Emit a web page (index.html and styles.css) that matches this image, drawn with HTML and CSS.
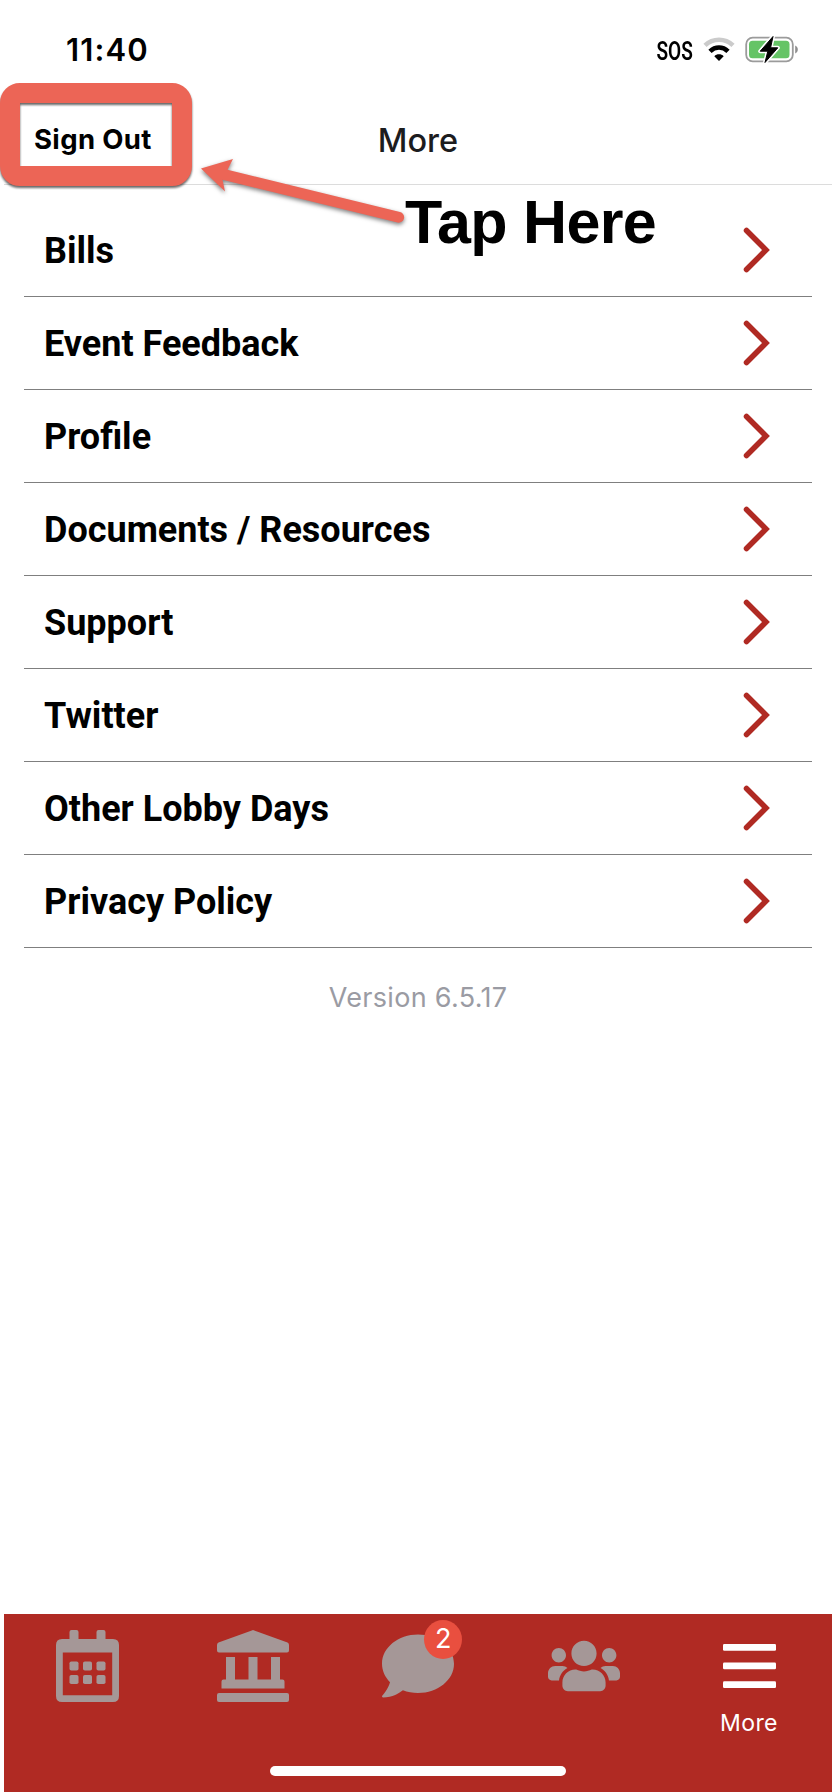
FILE: index.html
```html
<!DOCTYPE html>
<html lang="en">
<head>
    <meta charset="UTF-8">
    <meta name="viewport" content="width=device-width, initial-scale=1.0">
    <title>More</title>
    <link rel="stylesheet" href="styles.css">
</head>
<body>
    <div class="screen">
        <div class="status-bar">
            <span class="time">11:40</span>
            <div class="status-icons">
                <span class="sos">SOS</span>
                <svg class="wifi" width="32" height="25" viewBox="0 0 32 25">
                    <path d="M2 8.400C10 .8 22 .8 30 8.400" fill="none" stroke="#cbcbcb" stroke-width="4.600"/>
                    <path d="M7 14.300C12.200 9.200 19.800 9.200 25 14.300" fill="none" stroke="#000" stroke-width="4.600"/>
                    <path d="M11.300 19.200C13.800 16.600 18.200 16.600 20.700 19.200L16 24z"/>
                </svg>
                <svg class="battery" width="54" height="29" viewBox="0 0 54 29">
                    <rect x="1.200" y="2.700" width="46.600" height="23.600" rx="6.500" fill="#fff" stroke="#9b9b9b" stroke-width="1.800"/>
                    <rect x="4" y="5.800" width="40.500" height="17.400" rx="3.500" fill="#65c466"/>
                    <path d="M50.200 10.500c3.500 1.500 3.500 6.500 0 8z" fill="#8e8e8e"/>
                    <path d="M28 1.500L15.200 16.200h7.600L20 27.500l12.800-14.700h-7.200z" stroke="#fff" stroke-width="4" stroke-linejoin="round"/>
                    <path d="M28 1.500L15.200 16.200h7.600L20 27.500l12.800-14.700h-7.200z" stroke="#000" stroke-width="1" stroke-linejoin="round"/>
                </svg>
            </div>
        </div>

        <header class="header">
            <a class="sign-out">Sign Out</a>
            <h1 class="title">More</h1>
        </header>

        <ul class="menu">
            <li class="menu-item">Bills <svg class="chevron" viewBox="0 0 28 46"><path d="M3.500 3.500L23 23 3.500 42.500"/></svg></li>
            <li class="menu-item">Event Feedback <svg class="chevron" viewBox="0 0 28 46"><path d="M3.500 3.500L23 23 3.500 42.500"/></svg></li>
            <li class="menu-item">Profile <svg class="chevron" viewBox="0 0 28 46"><path d="M3.500 3.500L23 23 3.500 42.500"/></svg></li>
            <li class="menu-item">Documents / Resources <svg class="chevron" viewBox="0 0 28 46"><path d="M3.500 3.500L23 23 3.500 42.500"/></svg></li>
            <li class="menu-item">Support <svg class="chevron" viewBox="0 0 28 46"><path d="M3.500 3.500L23 23 3.500 42.500"/></svg></li>
            <li class="menu-item">Twitter <svg class="chevron" viewBox="0 0 28 46"><path d="M3.500 3.500L23 23 3.500 42.500"/></svg></li>
            <li class="menu-item">Other Lobby Days <svg class="chevron" viewBox="0 0 28 46"><path d="M3.500 3.500L23 23 3.500 42.500"/></svg></li>
            <li class="menu-item">Privacy Policy <svg class="chevron" viewBox="0 0 28 46"><path d="M3.500 3.500L23 23 3.500 42.500"/></svg></li>
        </ul>

        <p class="version">Version 6.5.17</p>

        <nav class="tab-bar">
            <div class="tabs">
                <a class="tab">
                    <svg width="63" height="72" viewBox="0 0 63 72">
                        <path fill-rule="evenodd" d="M13.500 9V2q0-2 2-2h5q2 0 2 2v7h18V2q0-2 2-2h5q2 0 2 2v7H57q6 0 6 6v51q0 6-6 6H6q-6 0-6-6V15q0-6 6-6zM6.800 22.500v42.700h49.400V22.500z"/>
                        <rect x="13.500" y="31.500" width="9" height="9" rx="1.800"/>
                        <rect x="27" y="31.500" width="9" height="9" rx="1.800"/>
                        <rect x="40.500" y="31.500" width="9" height="9" rx="1.800"/>
                        <rect x="13.500" y="45" width="9" height="9" rx="1.800"/>
                        <rect x="27" y="45" width="9" height="9" rx="1.800"/>
                        <rect x="40.500" y="45" width="9" height="9" rx="1.800"/>
                    </svg>
                </a>
                <a class="tab">
                    <svg width="72" height="72" viewBox="0 0 72 72">
                        <path d="M34.800.4q1.200-.6 2.400 0L70.500 12.500Q72 13.200 72 15v5.500q0 2-2 2H2q-2 0-2-2V15q0-1.800 1.500-2.500z"/>
                        <path d="M9 27h9v22.500h13.500V27h9v22.500H54V27h9v22.500h2.500q2 0 2 2v7h-63v-7q0-2 2-2H9z"/>
                        <rect y="63" width="72" height="9" rx="2"/>
                    </svg>
                </a>
                <a class="tab">
                    <svg width="72" height="72" viewBox="0 0 512 512">
                        <path d="M256 32C114.600 32 0 125.100 0 240c0 49.600 21.400 95 57 130.700C44.500 421.100 2.700 466 2.200 466.500c-2.200 2.300-2.800 5.700-1.500 8.700S4.800 480 8 480c66.300 0 116-31.800 140.600-51.400 32.700 12.300 69 19.400 107.400 19.400 141.400 0 256-93.100 256-208S397.400 32 256 32z"/>
                    </svg>
                    <span class="badge">2</span>
                </a>
                <a class="tab">
                    <svg width="72" height="72" viewBox="0 -64 640 640">
                        <path d="M96 224c35.300 0 64-28.700 64-64s-28.700-64-64-64-64 28.700-64 64 28.700 64 64 64zm448 0c35.300 0 64-28.700 64-64s-28.700-64-64-64-64 28.700-64 64 28.700 64 64 64zm32 32h-64c-17.600 0-33.500 7.100-45.100 18.600 40.300 22.100 68.900 62 75.100 109.400h66c17.700 0 32-14.300 32-32v-32c0-35.300-28.700-64-64-64zm-256 0c61.900 0 112-50.100 112-112S381.900 32 320 32 208 82.100 208 144s50.100 112 112 112zm76.800 32h-8.300c-20.800 10-43.900 16-68.500 16s-47.600-6-68.500-16h-8.300C179.600 288 128 339.600 128 403.200V432c0 26.500 21.500 48 48 48h288c26.500 0 48-21.500 48-48v-28.800c0-63.600-51.600-115.200-115.200-115.200zm-223.700-13.400C161.500 263.100 145.600 256 128 256H64c-35.300 0-64 28.700-64 64v32c0 17.700 14.300 32 32 32h65.900c6.300-47.400 34.900-87.300 75.200-109.400z"/>
                    </svg>
                </a>
                <a class="tab active">
                    <svg width="53" height="72" viewBox="0 0 53 72">
                        <rect y="14" width="53" height="6.800" rx="1.300"/>
                        <rect y="32.500" width="53" height="6.800" rx="1.300"/>
                        <rect y="51.200" width="53" height="6.800" rx="1.300"/>
                    </svg>
                    <span class="tab-label">More</span>
                </a>
            </div>
            <div class="home-indicator"></div>
        </nav>

        <!-- Callout over the Sign Out button -->
        <div class="callout-box"></div>
        <svg class="callout-arrow" width="220" height="90" viewBox="195 145 220 90">
            <path d="M201 168.500L233 159l-5.500 10.800L400 212a5.300 5.300 0 0 1-2.500 10.500L222.500 179.800 225 191.500z"/>
        </svg>
        <span class="callout-text">Tap Here</span>
    </div>
</body>
</html>
```
FILE: styles.css
```css
body {
    margin: 0;
    background-color: #fff;
    font-family: Inter, "Liberation Sans", sans-serif;
}

.screen {
    position: relative;
    display: flex;
    flex-direction: column;
    box-sizing: border-box;
    height: 1792px;
    padding-left: 4px;
    overflow: hidden;
}

.status-bar {
    display: flex;
    justify-content: space-between;
    align-items: center;
    height: 99px;
    padding: 0 33px 0 62px;
}

.time {
    font-size: 31px;
    font-weight: 600;
    letter-spacing: 1.1px;
}

.status-icons {
    display: flex;
    align-items: center;
}

.sos {
    margin-right: 10px;
    padding-top: 3px;
    font-family: Roboto, sans-serif;
    font-size: 25px;
    font-weight: 600;
    transform: scaleX(0.76);
    transform-origin: right center;
}

.wifi {
    margin-right: 10px;
}

.header {
    display: grid;
    grid-template-columns: 1fr auto 1fr;
    align-items: center;
    box-sizing: border-box;
    height: 86px;
    padding-bottom: 3px;
    border-bottom: 1px solid #dcdcdc;
}

.sign-out {
    padding: 0 0 2px 30px;
    font-size: 27.5px;
    font-weight: 700;
    letter-spacing: 0.35px;
}

.title {
    margin: 0;
    color: #1c1c1e;
    font-size: 32.5px;
    font-weight: 500;
}

.menu {
    margin: 19px 20px 0;
    padding: 0;
    list-style: none;
}

.menu-item {
    display: flex;
    justify-content: space-between;
    align-items: center;
    box-sizing: border-box;
    height: 93px;
    padding: 2px 41px 0 20px;
    border-bottom: 1px solid #7f7f7f;
    font-family: Roboto, sans-serif;
    font-size: 36px;
    font-weight: 700;
}

.chevron {
    width: 28px;
    height: 46px;
    margin-bottom: 3px;
    fill: none;
    stroke: #b02a23;
    stroke-width: 5.5;
    stroke-linecap: round;
}

.version {
    margin: 33px 0 0;
    color: #9a9ba3;
    font-size: 27px;
    line-height: 34px;
    letter-spacing: 0.3px;
    text-align: center;
}

.tab-bar {
    display: flex;
    flex-direction: column;
    justify-content: space-between;
    align-items: center;
    box-sizing: border-box;
    height: 178px;
    margin-top: auto;
    padding: 16px 0;
    background-color: #b02a23;
}

.tabs {
    display: grid;
    grid-template-columns: repeat(5, 165.5px);
    justify-content: center;
    width: 100%;
}

.tab {
    position: relative;
    display: flex;
    flex-direction: column;
    align-items: center;
    fill: #a59797;
}

.active {
    fill: #fff;
    color: #fff;
}

.tab-label {
    margin-top: 7px;
    font-size: 23px;
    line-height: 28px;
    letter-spacing: 0.4px;
}

.badge {
    position: absolute;
    top: -10px;
    left: 89px;
    width: 38px;
    height: 39px;
    border-radius: 50%;
    background-color: #e94f3f;
    color: #fff;
    font-size: 27px;
    line-height: 37px;
    text-align: center;
}

.home-indicator {
    width: 296px;
    height: 10px;
    border-radius: 5px;
    background-color: #fff;
}

.callout-box {
    position: absolute;
    top: 83px;
    left: 0;
    box-sizing: border-box;
    width: 192px;
    height: 103px;
    border: 20px solid #ec6556;
    border-radius: 20px;
    filter: drop-shadow(0 2px 1px rgba(0, 0, 0, 0.6));
}

.callout-arrow {
    position: absolute;
    top: 145px;
    left: 195px;
    fill: #ec6556;
    filter: drop-shadow(0 2px 2px rgba(0, 0, 0, 0.5));
}

.callout-text {
    position: absolute;
    top: 187px;
    left: 405px;
    font-family: "Liberation Sans", Arial, sans-serif;
    font-size: 61px;
    font-weight: 700;
    line-height: 70px;
    letter-spacing: -0.7px;
    white-space: nowrap;
}
```
